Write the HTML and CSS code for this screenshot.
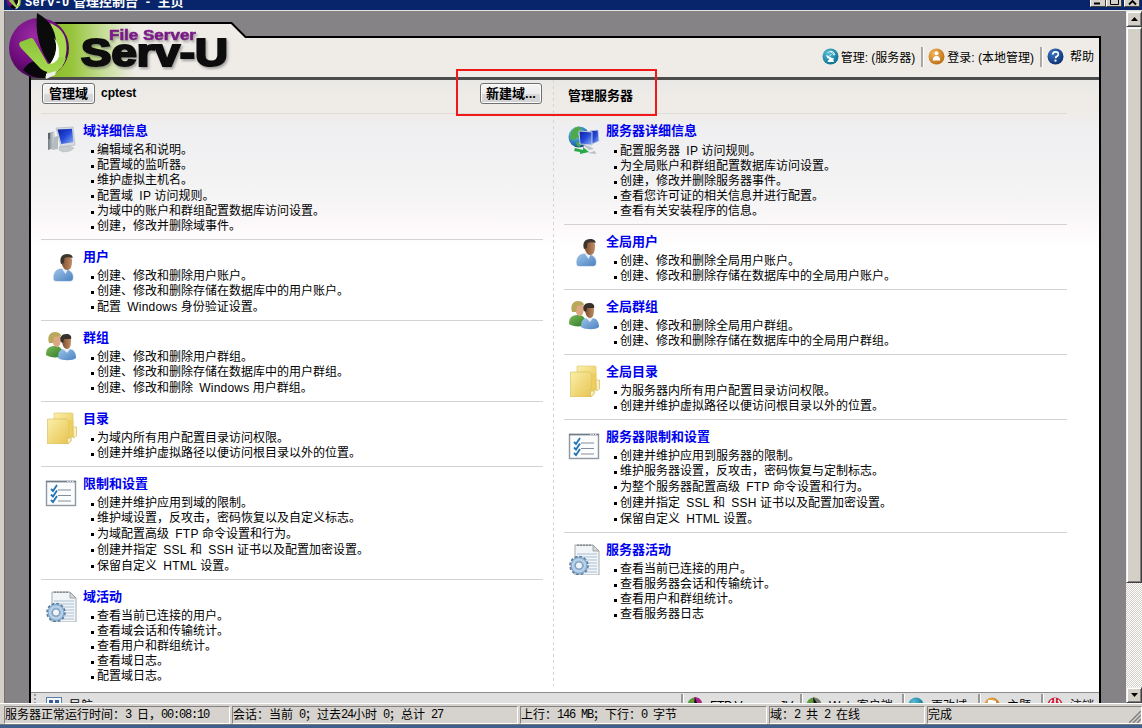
FILE: index.html
```html
<!DOCTYPE html>
<html lang="zh-CN">
<head>
<meta charset="utf-8">
<title>Serv-U 管理控制台 - 主页</title>
<link rel="stylesheet" href="styles.css">
</head>
<body>
<svg class="defs" width="0" height="0">
  <defs>
    <linearGradient id="screen" x1="0" y1="0" x2="1" y2="1"><stop offset="0" stop-color="#0a1f9c"/><stop offset=".5" stop-color="#2448d8"/><stop offset="1" stop-color="#8fb4f4"/></linearGradient>
    <linearGradient id="case" x1="0" y1="0" x2="1" y2="0"><stop offset="0" stop-color="#707a80"/><stop offset="1" stop-color="#e4e8ea"/></linearGradient>
    <linearGradient id="shirt" x1="0" y1="0" x2="1" y2="1"><stop offset="0" stop-color="#9cc4ea"/><stop offset="1" stop-color="#4c82c0"/></linearGradient>
    <linearGradient id="skin" x1="0" y1="0" x2="1" y2="0"><stop offset="0" stop-color="#7a4a2c"/><stop offset="1" stop-color="#c08c64"/></linearGradient>
    <linearGradient id="green" x1="0" y1="0" x2="1" y2="1"><stop offset="0" stop-color="#7cba58"/><stop offset="1" stop-color="#2f7a28"/></linearGradient>
    <linearGradient id="paper" x1="0" y1="0" x2="1" y2="1"><stop offset="0" stop-color="#fbefa8"/><stop offset="1" stop-color="#e6c451"/></linearGradient>
    <radialGradient id="earth" cx=".35" cy=".3" r=".8"><stop offset="0" stop-color="#b8e8f4"/><stop offset=".45" stop-color="#3a94cc"/><stop offset="1" stop-color="#0d3f7c"/></radialGradient>
    <radialGradient id="ball" cx=".4" cy=".3" r=".75"><stop offset="0" stop-color="#9a2aa4"/><stop offset=".6" stop-color="#6e0c7c"/><stop offset="1" stop-color="#3c0446"/></radialGradient>
    <linearGradient id="tab" x1="0" y1="0" x2="1" y2="0"><stop offset="0" stop-color="#86b81c"/><stop offset=".15" stop-color="#96c43a"/><stop offset=".3" stop-color="#c4dc94"/><stop offset=".46" stop-color="#efece7"/></linearGradient>
    <linearGradient id="vee" x1="0" y1="0" x2="0" y2="1"><stop offset="0" stop-color="#8cc43a"/><stop offset="1" stop-color="#a6d850"/></linearGradient>
    <radialGradient id="teal" cx=".35" cy=".3" r=".8"><stop offset="0" stop-color="#58bcd4"/><stop offset="1" stop-color="#056a8c"/></radialGradient>
    <radialGradient id="amber" cx=".35" cy=".3" r=".8"><stop offset="0" stop-color="#f2b458"/><stop offset="1" stop-color="#b86a10"/></radialGradient>
    <radialGradient id="blue" cx=".35" cy=".3" r=".8"><stop offset="0" stop-color="#3a78c4"/><stop offset="1" stop-color="#0a2a6c"/></radialGradient>
    <filter id="soft" x="-10%" y="-20%" width="130%" height="160%"><feDropShadow dx="1.500" dy="2" stdDeviation="1.200" flood-color="#555" flood-opacity=".5"/></filter>
  </defs>
  <symbol id="i-pc" viewBox="0 0 32 32">
    <path d="M3 9l7-2v17l-7 2z" fill="url(#case)"/><path d="M3 9h2v6H3z" fill="#59636a"/>
    <path d="M9 13l4-1v13l-6 1z" fill="#b4bcc0"/>
    <path d="M15 22h9l5 2-4 3-7 1-4-2z" fill="#c6ccd0" stroke="#a8b0b4" stroke-width=".5"/>
    <path d="M11 4l17-1 2 18-14 2z" fill="#d6dce2" stroke="#aab2ba" stroke-width=".6"/>
    <path d="M12.500 5.500l14.500-.8 1.400 13.600-12 1.700z" fill="url(#screen)"/>
  </symbol>
  <symbol id="i-user" viewBox="0 0 32 32">
    <path d="M10 28c-1-6 1-10 6-11h5c5 1 8 4 8 8 0 3-1 4-3 4H13q-3 0-3-1z" fill="url(#shirt)" stroke="#7ba2cc" stroke-width=".5"/>
    <path d="M18 17l3.500 5 3-6z" fill="#e8f0fa"/>
    <path d="M17 7c0-3 11-4 11 1 0 6-1 10-5 10-3 0-6-5-6-11z" fill="url(#skin)"/>
    <path d="M17 12c-2-6 1-10 6-10 4 0 6 2 5.500 4-3-1-6-1-8 0l-.5 5z" fill="#3c352e"/>
  </symbol>
  <symbol id="i-group" viewBox="0 0 32 32">
    <path d="M1 24c0-6 2-8 7-9h4c4 1 6 4 6 10-5 2-13 2-17-1z" fill="url(#green)"/>
    <path d="M7 6c0-3 9-3 9 1s-1 9-4 9-5-4-5-10z" fill="#dca884"/><path d="M4 12C2 5 5 1 10 1s6 3 6 4l-7 1-1 6z" fill="#b9a75c"/>
    <path d="M13 27c0-6 2-9 7-9h4c5 0 7 4 7 9-3 3-14 3-18 0z" fill="url(#shirt)"/>
    <path d="M18 18l4 4 3-4z" fill="#e8f0fa"/>
    <path d="M17 9c0-4 9-4 9 0 0 6-1 9-4 9s-5-4-5-9z" fill="url(#skin)"/><path d="M16 11c-2-5 1-8 5-8s6 2 5 5l-7 0-1 4z" fill="#37302b"/>
  </symbol>
  <symbol id="i-folder" viewBox="0 0 32 32">
    <path d="M9 1h18q1 0 1 1v23l-19 2z" fill="url(#paper)" stroke="#dfc567" stroke-width=".6"/>
    <path d="M2.500 7h19l2 2v23h-21z" fill="url(#paper)" stroke="#d5b955" stroke-width=".6"/>
    <path d="M23.500 9v23l3-3v-6l5-1v-7h-3V8z" fill="#eccd62"/><path d="M22.500 26h3.500v3l-3.500 3zM28 15h3.500v9l-3 2z" fill="#fbf0c0" stroke="#d2b65b" stroke-width=".6"/>
  </symbol>
  <symbol id="i-list" viewBox="0 0 32 32">
    <rect x="1.500" y="4.500" width="29" height="24" fill="#fafcfe" stroke="#8f98a2" stroke-width="1.400"/>
    <path d="M1 4.500h30" stroke="#727c88" stroke-width="1.500"/><path d="M22 4.500h7" stroke="#dbe2ea" stroke-dasharray="1.500 1"/>
    <path d="M13 13h13M13 18.500h13M13 24h13" stroke="#858c9a" stroke-width="1.200"/>
    <path d="M6 12l2 2 4-6M6 17.500l2 2 4-6M6 23l2 2 4-6" fill="none" stroke="#2474b4" stroke-width="1.800"/>
  </symbol>
  <symbol id="i-log" viewBox="0 0 32 32">
    <path d="M7 2h18l6 6v24H7z" fill="#f2f5f7" stroke="#a4aaae"/><path d="M25 2v6h6z" fill="#d4d8da" stroke="#8d9498" stroke-width=".8"/>
    <path d="M9 3q1-3 2 0m1 0q1-3 2 0m1 0q1-3 2 0m1 0q1-3 2 0m1 0q1-3 2 0" fill="none" stroke="#777" stroke-width=".9"/>
    <path d="M9 11h20M9 14h20M9 17h20M9 20h20M9 23h20M9 26h20M9 29h20" stroke="#a9bfd4"/>
    <circle cx="11" cy="22.500" r="8.600" fill="none" stroke="#587c9f" stroke-width="2.400" stroke-dasharray="2.700 1.800"/>
    <circle cx="11" cy="22.500" r="6.300" fill="none" stroke="#7fa6ca" stroke-width="4.500"/><circle cx="11" cy="22.500" r="6" fill="none" stroke="#b7d1e8" stroke-width="2.500"/><circle cx="11" cy="22.500" r="3.700" fill="#eef4fa" stroke="#5f86ac" stroke-width=".9"/>
  </symbol>
  <symbol id="i-globe" viewBox="0 0 32 32">
    <circle cx="11" cy="13" r="10.500" fill="url(#earth)"/>
    <path d="M3 8q4-6 9-5l2 3-4 3 1 4-5 3-4-1zM8 18l5 1-1 4-3-1z" fill="#4fa94c"/>
    <path d="M22 7l8-1 1 11-7 3z" fill="url(#screen)" stroke="#c4ccda" stroke-width=".8"/>
    <path d="M11 7l13 1v13l-12-1z" fill="url(#screen)" stroke="#c4ccda"/>
    <path d="M15 21l6 1 5 3-5 1z" fill="#bac3ca"/><path d="M7 24l8 2v-3l6 5-9 2v-2l-6-1z" fill="#28a948"/><path d="M20 29l8 1-1-3z" fill="#b6bec2"/>
  </symbol>
  <symbol id="i-ball" viewBox="0 0 62 66">
    <circle cx="31" cy="35" r="30" fill="url(#ball)"/>
    <path d="M15 57q5-8 12-9l18 8-8 9q-12 1-22-8z" fill="#08060a"/>
    <path d="M42 10q10 4 14 12 6 14-2 32l-8 8-9 3 9-26q3-14-4-29z" fill="#a6d850"/>
    <path d="M12 29l11-4q2 0 3 2l14 24q6-2 10-7l8 1q-3 12-14 14-8 1-13-5L13 35q-3-4-1-6z" fill="url(#vee)"/>
    <path d="M38 61l10-3-1 4-9 4z" fill="#eee"/>
    <path d="M29 0q18 10 19 29 1 14-6 22Q26 30 29 0z" fill="#0b0b0b"/>
    <path d="M46 25q6 12-4 26 10-2 9-12 0-8-5-14z" fill="#fff"/>
  </symbol>
</svg>

<div class="window">
  <header class="titlebar">
    <svg class="title-icon" viewBox="0 0 62 66"><use href="#i-ball"/></svg>
    <span class="title-text"><span class="title-latin">Serv-U</span> 管理控制台 <b class="title-dash">-</b> 主页</span>
    <div class="win-buttons">
      <span class="win-btn"><svg width="14" height="8"><path d="M3 3.500h6" stroke="#000" stroke-width="2"/></svg></span>
      <span class="win-btn"><svg width="14" height="8"><path d="M3.500 0v4.500h8V0" fill="none" stroke="#000"/></svg></span>
      <span class="win-btn win-close"><svg width="14" height="8"><path d="M4 4.500L7.500 1 11 4.500" fill="none" stroke="#000" stroke-width="1.800"/></svg></span>
    </div>
  </header>

  <div class="client">
    <main class="panel">
      <nav class="account">
        <a class="account-item"><svg width="17" height="17" viewBox="0 0 17 17"><circle cx="8.500" cy="8.500" r="8" fill="url(#teal)"/><path d="M4.500 7.500l6 3.500h1.500M8.500 10l-2.500 3.500h5.500L9.500 10" fill="#fff" stroke="#fff"/><path d="M4.500 7.500q-.5 3.500 5.500 3.500z" fill="#fff"/><path d="M7 8.500L9.500 6M5.500 4.500q4-2.500 6.500 3M8 3q4 0 5 4" fill="none" stroke="#e4f8fc"/></svg><span>管理: (服务器)</span></a>
        <a class="account-item"><svg width="17" height="17" viewBox="0 0 17 17"><circle cx="8.500" cy="8.500" r="8" fill="url(#amber)"/><circle cx="8.500" cy="5.200" r="2" fill="#fff"/><path d="M4.800 12.500q0-4.500 3.700-4.500t3.700 4.500z" fill="#fff"/></svg><span>登录: (本地管理)</span></a>
        <a class="account-item account-help"><svg width="17" height="17" viewBox="0 0 17 17"><circle cx="8.500" cy="8.500" r="8" fill="url(#blue)"/><path d="M5.800 6.500q0-2.700 2.800-2.700t2.700 2.500q0 1.400-1.500 2.100-1.200.5-1.200 1.800" fill="none" stroke="#fff" stroke-width="1.700"/><circle cx="8.500" cy="12.700" r="1.100" fill="#fff"/></svg><span>帮助</span></a>
      </nav>

      <div class="content">
        <div class="head cols">
          <div class="head-left"><button class="btn">管理域</button><b class="domain">cptest</b><button class="btn btn-new">新建域...</button></div>
          <i class="divider"></i>
          <h2 class="head-right">管理服务器</h2>
        </div>
        <div class="cols body">
          <div class="col">
            <section class="sec"><svg class="icon"><use href="#i-pc"/></svg><h3>域详细信息</h3>
              <ul><li>编辑域名和说明。</li><li>配置域的监听器。</li><li>维护虚拟主机名。</li><li class="mix">配置域 <span>IP</span> 访问规则。</li><li>为域中的账户和群组配置数据库访问设置。</li><li>创建，修改并删除域事件。</li></ul></section>
            <section class="sec"><svg class="icon icon-user"><use href="#i-user"/></svg><h3>用户</h3>
              <ul><li>创建、修改和删除用户账户。</li><li>创建、修改和删除存储在数据库中的用户账户。</li><li class="mix">配置 <span>Windows</span> 身份验证设置。</li></ul></section>
            <section class="sec"><svg class="icon"><use href="#i-group"/></svg><h3>群组</h3>
              <ul><li>创建、修改和删除用户群组。</li><li>创建、修改和删除存储在数据库中的用户群组。</li><li class="mix">创建、修改和删除 <span>Windows</span> 用户群组。</li></ul></section>
            <section class="sec"><svg class="icon"><use href="#i-folder"/></svg><h3>目录</h3>
              <ul><li>为域内所有用户配置目录访问权限。</li><li>创建并维护虚拟路径以便访问根目录以外的位置。</li></ul></section>
            <section class="sec"><svg class="icon"><use href="#i-list"/></svg><h3>限制和设置</h3>
              <ul><li>创建并维护应用到域的限制。</li><li>维护域设置，反攻击，密码恢复以及自定义标志。</li><li class="mix">为域配置高级 <span>FTP</span> 命令设置和行为。</li><li class="mix">创建并指定 <span>SSL</span> 和 <span>SSH</span> 证书以及配置加密设置。</li><li class="mix">保留自定义 <span>HTML</span> 设置。</li></ul></section>
            <section class="sec"><svg class="icon"><use href="#i-log"/></svg><h3>域活动</h3>
              <ul><li>查看当前已连接的用户。</li><li>查看域会话和传输统计。</li><li>查看用户和群组统计。</li><li>查看域日志。</li><li>配置域日志。</li></ul></section>
          </div>
          <i class="divider"></i>
          <div class="col">
            <section class="sec"><svg class="icon"><use href="#i-globe"/></svg><h3>服务器详细信息</h3>
              <ul><li class="mix">配置服务器 <span>IP</span> 访问规则。</li><li>为全局账户和群组配置数据库访问设置。</li><li>创建，修改并删除服务器事件。</li><li>查看您许可证的相关信息并进行配置。</li><li>查看有关安装程序的信息。</li></ul></section>
            <section class="sec"><svg class="icon icon-user"><use href="#i-user"/></svg><h3>全局用户</h3>
              <ul><li>创建、修改和删除全局用户账户。</li><li>创建、修改和删除存储在数据库中的全局用户账户。</li></ul></section>
            <section class="sec"><svg class="icon"><use href="#i-group"/></svg><h3>全局群组</h3>
              <ul><li>创建、修改和删除全局用户群组。</li><li>创建、修改和删除存储在数据库中的全局用户群组。</li></ul></section>
            <section class="sec"><svg class="icon"><use href="#i-folder"/></svg><h3>全局目录</h3>
              <ul><li>为服务器内所有用户配置目录访问权限。</li><li>创建并维护虚拟路径以便访问根目录以外的位置。</li></ul></section>
            <section class="sec"><svg class="icon"><use href="#i-list"/></svg><h3>服务器限制和设置</h3>
              <ul><li>创建并维护应用到服务器的限制。</li><li>维护服务器设置，反攻击，密码恢复与定制标志。</li><li class="mix">为整个服务器配置高级 <span>FTP</span> 命令设置和行为。</li><li class="mix">创建并指定 <span>SSL</span> 和 <span>SSH</span> 证书以及配置加密设置。</li><li class="mix">保留自定义 <span>HTML</span> 设置。</li></ul></section>
            <section class="sec"><svg class="icon"><use href="#i-log"/></svg><h3>服务器活动</h3>
              <ul><li>查看当前已连接的用户。</li><li>查看服务器会话和传输统计。</li><li>查看用户和群组统计。</li><li>查看服务器日志</li></ul></section>
          </div>
        </div>
      </div>

      <footer class="toolbar">
        <div class="tool tool-nav"><svg width="16" height="16"><rect x=".5" y=".5" width="15" height="15" fill="#f4f8fc" stroke="#5c7ea4"/><path d="M3 3h4v9H3zM9 3h4v9H9z" fill="#3a5a9c"/></svg><span>导航</span></div>
        <div class="tool tool-ftp"><svg width="16" height="16"><circle cx="8" cy="8" r="7.500" fill="#5a9a3a"/><path d="M7 0q8 0 8 8H8z" fill="#b02088"/><path d="M8 0l2 6-3 2z" fill="#111"/></svg><span>FTP Voyager JV</span></div>
        <div class="tool tool-web"><svg width="16" height="16"><circle cx="8" cy="8" r="7.500" fill="#5a9a3a"/><path d="M8 .5q7 1 7 7.500H8z" fill="#777"/><path d="M7 0l4 6-3 4z" fill="#111"/></svg><span>Web 客户端</span></div>
        <div class="tool tool-domain"><svg width="16" height="16"><circle cx="8" cy="8" r="7.500" fill="url(#teal)"/><path d="M3 6h3v4H3zM8 6h5v3H8z" fill="#fff"/></svg><span>更改域</span></div>
        <div class="tool tool-theme"><svg width="16" height="16"><circle cx="8" cy="8" r="7.500" fill="url(#amber)"/><path d="M4 3h4l4 1v7H4z" fill="#fff"/></svg><span>主题</span></div>
        <div class="tool tool-out"><svg width="16" height="16"><circle cx="8" cy="8" r="7.500" fill="#c82440"/><path d="M5 3q-4 5 0 8M11 3q4 5 0 8M8 1v6" fill="none" stroke="#fff" stroke-width="1.500"/></svg><span>注销</span></div>
      </footer>
    </main>

    <aside class="scroll">
      <span class="sb-btn"><svg width="7" height="4"><path d="M0 4h7L3.500 0z"/></svg></span>
      <span class="sb-thumb"></span>
      <span class="sb-track"></span>
      <span class="sb-btn"><svg width="7" height="4"><path d="M0 0h7L3.500 4z"/></svg></span>
    </aside>
  </div>

  <footer class="status">
    <span class="st st-1">服务器正常运行时间：<i>3 </i>日，<i>00:08:10</i></span>
    <span class="st st-2">会话：当前<i> 0</i>；过去<i>24</i>小时<i> 0</i>；总计<i> 27</i></span>
    <span class="st st-3">上行：<i>146 MB</i>；下行：<i>0 </i>字节</span>
    <span class="st st-4">域：<i>2 </i>共<i> 2 </i>在线</span>
    <span class="st st-5">完成<svg class="grip" width="12" height="12"><path d="M0 12L12 0M4 12l8-8M8 12l4-4" stroke="#808080" stroke-width="1.500"/></svg></span>
  </footer>

  <svg class="logo" width="260" height="82" viewBox="0 0 260 82">
    <path d="M40 23h192l14 14v40H40z" fill="url(#tab)"/>
    <path d="M44 23h187.500l14 14h4" fill="none" stroke="#000" stroke-width="2"/>
    <svg x="8" y="13" width="62" height="66" viewBox="0 0 62 66"><use href="#i-ball"/></svg>
    <g filter="url(#soft)">
      <text class="logo-big" x="81" y="65.500" textLength="147" lengthAdjust="spacingAndGlyphs">Serv-U</text>
      <text class="logo-small" x="109" y="39.500" textLength="87" lengthAdjust="spacingAndGlyphs">File Server</text>
    </g>
  </svg>
  <div class="callout"></div>
</div>
</body>
</html>
```
FILE: styles.css
```css
* { box-sizing: border-box; }
body { margin: 0; overflow: hidden; font: 12px/15px "Liberation Sans", "Noto Sans CJK SC", sans-serif; color: #000; }
.defs { position: absolute; }
.window { position: relative; width: 1142px; height: 728px; overflow: hidden; background: #d4d0c8; display: flex; flex-direction: column; }

.titlebar { height: 10px; flex: none; margin-left: 4px; background: #08246b; display: flex; align-items: flex-end; overflow: hidden; }
.title-icon { width: 16px; height: 16px; margin: 0 3px 1px 2px; flex: none; }
.title-text { color: #fff; font-weight: bold; font-size: 13px; line-height: 16px; white-space: pre; margin-bottom: -1px; }
.title-latin { font: bold 12px/16px "Liberation Mono", monospace; letter-spacing: .2px; }
.title-dash { margin: 0 4px; }
.win-buttons { margin-left: auto; display: flex; align-self: flex-start; padding-right: 2px; }
.win-btn { width: 16px; height: 7px; background: #d4d0c8; border: solid #404040; border-width: 0 1px 1px 0; border-left: 1px solid #fff; overflow: hidden; display: flex; }
.win-close { margin-left: 2px; }

.client { height: 693px; flex: none; border-left: 4px solid #d4d0c8; border-top: 1px solid #e4e2e4; background: #868386; display: flex; box-shadow: inset 1px 0 #747074; }
.panel { width: 1072px; height: 667px; margin: 25px 0 0 25px; border: solid #000; border-width: 2px 2px 0; background: #fff; display: flex; flex-direction: column; overflow: hidden; }
.account { height: 42px; flex: none; display: flex; justify-content: flex-end; align-items: flex-start; padding: 9px 5px 0 0; background: #efece7; border-bottom: 3px solid #555; border-bottom-style: double; border-bottom-color: #4c4c4c; background-clip: padding-box; background-color: #efece7; }
.account { border-bottom-style: solid; }
.account-item { display: flex; gap: 2px; height: 20px; padding-right: 6px; margin-right: 5px; border-right: 2px solid #aaa8a5; box-shadow: 1px 0 #fff; line-height: 23px; white-space: nowrap; }
.account-item svg { flex: none; margin-top: 1px; }
.account-help { padding: 0; margin: 0; border: 0; box-shadow: none; gap: 6px; line-height: 20px; }

.content { height: 612px; flex: none; padding-left: 10px; background: linear-gradient(#e7e8e6, #eeebe7 14px, #efece8 32px, #efeff1 50px, #f3f3f4 105px, #f8f6f7 130px, #fdf9fa 146px, #fff 170px); }
.cols { display: grid; grid-template-columns: 502px 1px 503px; column-gap: 10px; width: 1026px; }
.head { height: 34px; border-bottom: 1px solid #dedbd8; }
.head-left { display: flex; align-items: flex-start; padding: 3px 1px; }
.head-right { margin: 0; padding: 8px 0 0 4px; font-size: 13px; line-height: 16px; }
.btn { width: 53px; height: 21px; padding: 0; border: 1px solid #707070; border-radius: 3px; background: linear-gradient(#f5f5f5, #ededed 50%, #d9d9dc 52%, #d2d2d5); box-shadow: inset 0 0 0 1px #fcfcfc; font: bold 13px/17px "Liberation Sans", "Noto Sans CJK SC", sans-serif; color: #000; white-space: nowrap; }
.btn-new { width: 62px; margin-left: auto; }
.domain { margin: 3px 0 0 6px; }
.divider { background: repeating-linear-gradient(#d5d5d5 0 3px, transparent 3px 6px); }
.body > .divider { height: 572px; }

.sec { position: relative; padding: 8px 0 5px 42px; border-top: 1px solid #d3d3d3; }
.sec:first-child { margin-top: -1px; border-top-color: transparent; }
.sec h3 { margin: 0; font-size: 13px; line-height: 18px; height: 21px; color: #00e; }
.icon { position: absolute; left: 4px; top: 10px; width: 32px; height: 32px; }
.icon-user { top: 12px; left: 3px; }
.sec ul { list-style: none; margin: 0; padding: 0; }
.sec li { height: 15px; padding-left: 14px; white-space: pre; display: flex; background: linear-gradient(#000, #000) 8px 7px / 3px 3px no-repeat; }
.sec .mix { height: 16px; padding-top: 1px; }
.mix span { margin-left: 3px; letter-spacing: .2px; }

.toolbar { height: 24px; flex: none; background: #dfdfdf; border-top: 1px solid #8c8c8c; display: grid; grid-template-columns: 650px 119px 102px 76px 63px 58px; }
.tool { display: flex; gap: 7px; padding: 3px 0 0 4px; white-space: nowrap; overflow: hidden; border-left: 2px solid #999; box-shadow: inset 1px 0 #fff; margin-top: 1px; }
.tool svg { flex: none; }
.tool span { margin-top: 2px; }
.tool-nav { border-left: 2px dotted #999; box-shadow: none; padding-left: 10px; margin-left: 3px; }
.tool-ftp span { letter-spacing: -.3px; }

.scroll { width: 16px; margin-left: auto; display: flex; flex-direction: column; background: #d4d0c8; }
.sb-btn { height: 16px; display: flex; align-items: center; justify-content: center; }
.sb-btn, .sb-thumb { background: #d4d0c8; border: 1px solid; border-color: #eee #404040 #404040 #eee; box-shadow: inset 1px 1px #fff, inset -1px -1px #808080; }
.sb-thumb { height: 556px; }
.sb-track { flex: 1; background: repeating-conic-gradient(#fff 0 25%, #d4d0c8 0 50%) 0 0 / 2px 2px; }

.status { height: 25px; flex: none; padding: 2px 0 0 4px; border-top: 1px solid #fff; border-bottom: 3px solid #3f5f8c; display: flex; gap: 2px; background: #d6d3ce; box-shadow: inset 0 -1px #777; }
.st { height: 18px; padding-left: 0; line-height: 16px; border: 1px solid; border-color: #848284 #fff #fff #848284; white-space: pre; display: flex; }
.st i { font: 12px/16px "Liberation Mono", monospace; letter-spacing: -1.2px; white-space: pre; }
.st-1 { width: 226px; }
.st-2 { width: 286px; }
.st-3 { width: 247px; }
.st-4 { width: 156px; }
.st-5 { flex: 1; }
.grip { margin: 4px 0 0 auto; }

.logo { position: absolute; left: 0; top: 0; }
.logo-big { font: bold 39px "Liberation Sans", sans-serif; fill: #0a0a0a; stroke: #0a0a0a; stroke-width: 2.2px; }
.logo-small { font: bold 14px "Liberation Sans", sans-serif; fill: #7a1a86; stroke: #7a1a86; stroke-width: .5px; }
.callout { position: absolute; left: 456px; top: 69px; width: 201px; height: 47px; border: 2px solid #f01818; }
```
